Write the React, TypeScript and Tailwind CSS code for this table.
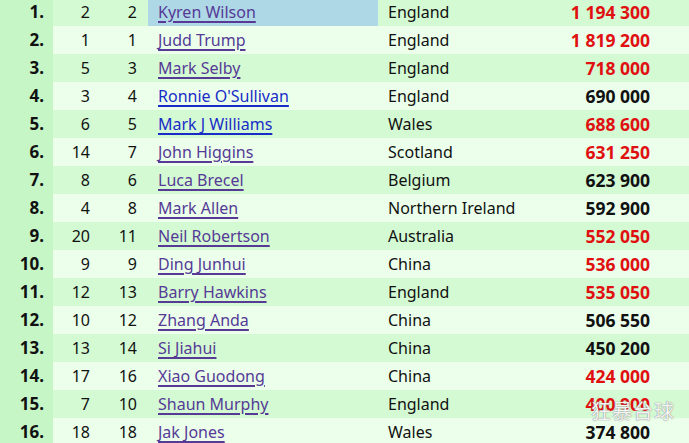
import React from "react";

type Row = {
  r: string;
  a: string;
  b: string;
  name: string;
  blue?: boolean;
  country: string;
  pts: string;
  red: boolean;
};

const rows: Row[] = [
  { r: "1.", a: "2", b: "2", name: "Kyren Wilson", country: "England", pts: "1 194 300", red: true },
  { r: "2.", a: "1", b: "1", name: "Judd Trump", country: "England", pts: "1 819 200", red: true },
  { r: "3.", a: "5", b: "3", name: "Mark Selby", country: "England", pts: "718 000", red: true },
  { r: "4.", a: "3", b: "4", name: "Ronnie O'Sullivan", blue: true, country: "England", pts: "690 000", red: false },
  { r: "5.", a: "6", b: "5", name: "Mark J Williams", blue: true, country: "Wales", pts: "688 600", red: true },
  { r: "6.", a: "14", b: "7", name: "John Higgins", country: "Scotland", pts: "631 250", red: true },
  { r: "7.", a: "8", b: "6", name: "Luca Brecel", country: "Belgium", pts: "623 900", red: false },
  { r: "8.", a: "4", b: "8", name: "Mark Allen", country: "Northern Ireland", pts: "592 900", red: false },
  { r: "9.", a: "20", b: "11", name: "Neil Robertson", country: "Australia", pts: "552 050", red: true },
  { r: "10.", a: "9", b: "9", name: "Ding Junhui", country: "China", pts: "536 000", red: true },
  { r: "11.", a: "12", b: "13", name: "Barry Hawkins", country: "England", pts: "535 050", red: true },
  { r: "12.", a: "10", b: "12", name: "Zhang Anda", country: "China", pts: "506 550", red: false },
  { r: "13.", a: "13", b: "14", name: "Si Jiahui", country: "China", pts: "450 200", red: false },
  { r: "14.", a: "17", b: "16", name: "Xiao Guodong", country: "China", pts: "424 000", red: true },
  { r: "15.", a: "7", b: "10", name: "Shaun Murphy", country: "England", pts: "400 900", red: true },
  { r: "16.", a: "18", b: "18", name: "Jak Jones", country: "Wales", pts: "374 800", red: false },
];

export default function App() {
  return (
    <div
      className="relative w-[689px] h-[443px] overflow-hidden bg-[#e6fde6] text-[16px] text-[#111]"
      style={{ fontFamily: '"Noto Sans", "Open Sans", sans-serif' }}
    >
      <div className="-mt-[2px] flex flex-col">
        {rows.map((row, i) => {
          const odd = i % 2 === 0;
          const rowBg = odd ? "bg-[#d4fad4]" : "bg-[#ebffeb]";
          return (
            <div
              key={row.r}
              className={`grid h-[28px] grid-cols-[53px_47px_48px_230px_162px_120px_1fr] items-center leading-[28px] ${rowBg}`}
            >
              <div className="h-full bg-[#c6f6c6] pr-[9px] text-right text-[17px] font-bold">{row.r}</div>
              <div className="pr-[10px] text-right">{row.a}</div>
              <div className="pr-[11px] text-right">{row.b}</div>
              <div className={`h-full pl-[10px] ${i === 0 ? "bg-[#aed8e6]" : ""}`}>
                <span
                  className={`underline decoration-[1.5px] underline-offset-[3px] ${row.blue ? "text-[#1a2cc8]" : "text-[#563a96]"}`}
                >
                  {row.name}
                </span>
              </div>
              <div className="pl-[10px] whitespace-nowrap">{row.country}</div>
              <div
                className={`pr-[10px] text-right text-[17.5px] font-bold ${row.red ? "text-[#e01010]" : "text-[#111]"}`}
              >
                {row.pts}
              </div>
              <div />
            </div>
          );
        })}
      </div>
      <div
        className="absolute left-[591px] top-[399px] text-[20px] leading-[24px] tracking-[1px] text-white/90 [text-shadow:0_0_1px_#888,0_0_1px_#888]"
        style={{ fontFamily: '"Noto Sans CJK SC", sans-serif' }}
      >
        狂暴台球
      </div>
    </div>
  );
}
